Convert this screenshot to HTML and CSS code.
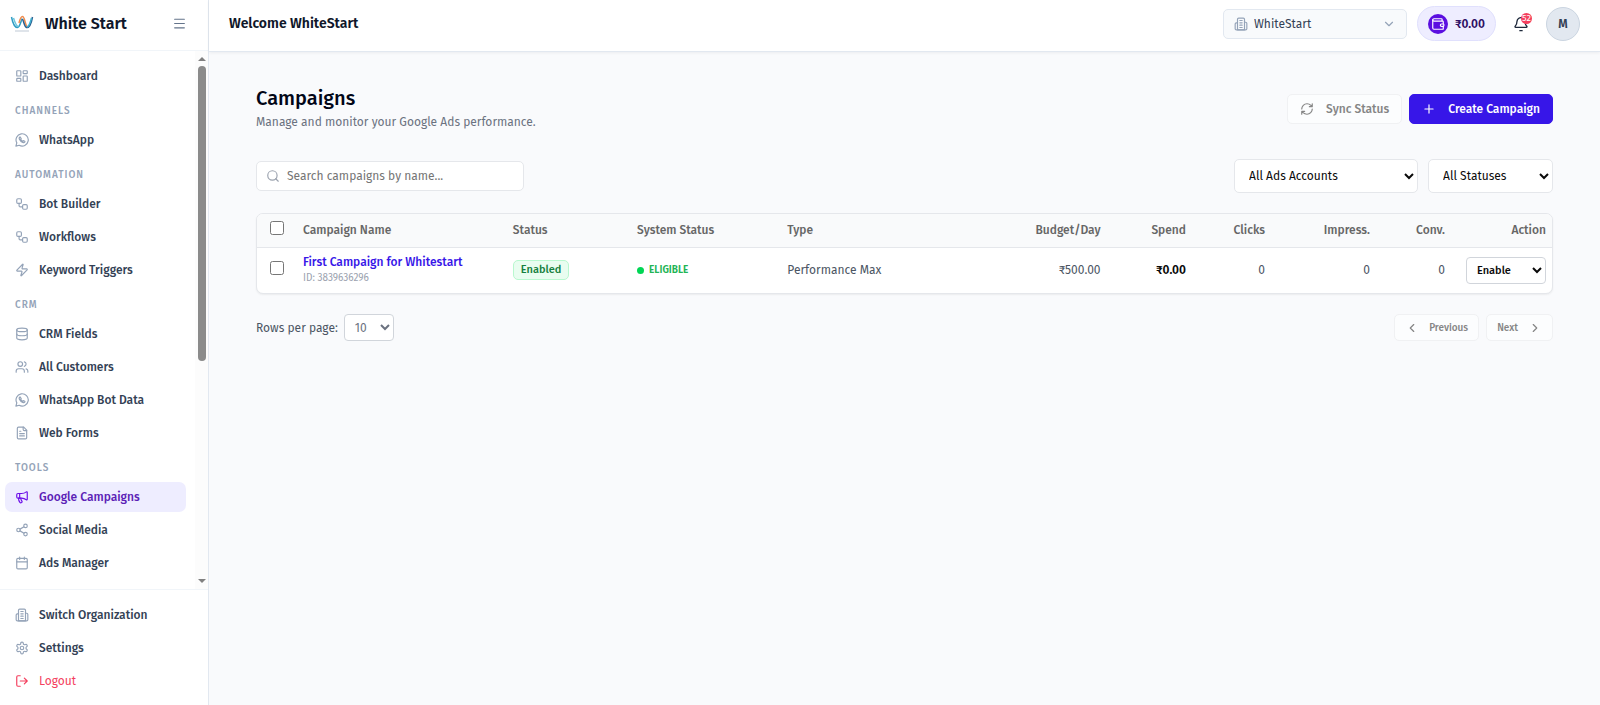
FILE: index.html
```html
<!DOCTYPE html>
<html lang="en">
<head>
    <meta charset="UTF-8">
    <meta name="viewport" content="width=device-width, initial-scale=1.0">
    <title>White Start - Campaigns</title>
    <link rel="stylesheet" href="styles.css">
</head>
<body>
    <!-- icon sprite -->
    <svg class="sprite" aria-hidden="true">
        <symbol id="i-dashboard" viewBox="0 0 24 24"><rect x="3" y="3" width="7" height="9" rx="1"/><rect x="14" y="3" width="7" height="5" rx="1"/><rect x="14" y="12" width="7" height="9" rx="1"/><rect x="3" y="16" width="7" height="5" rx="1"/></symbol>
        <symbol id="i-whatsapp" viewBox="0 0 24 24"><path d="M1.5 22.5l1.6-5.6A10.5 10.5 0 1 1 7.2 21z"/><path d="M8.6 6.8c-1.6.9-1.7 2.800-.8 4.500 1.300 2.500 3 4.200 5.400 5.100 1.800.6 3.600-.1 3.900-2l-2.500-1.300-1.200 1.300c-1.800-.7-2.900-1.900-3.700-3.500l1-1.300z"/></symbol>
        <symbol id="i-workflow" viewBox="0 0 24 24"><rect x="3" y="3" width="8" height="8" rx="2"/><path d="M7 11v4a2 2 0 0 0 2 2h4"/><rect x="13" y="13" width="8" height="8" rx="2"/></symbol>
        <symbol id="i-zap" viewBox="0 0 24 24"><path d="M4 14a1 1 0 0 1-.78-1.630l9.900-10.200a.5.5 0 0 1 .86.460l-1.920 6.020A1 1 0 0 0 13 10h7a1 1 0 0 1 .78 1.630l-9.900 10.200a.5.5 0 0 1-.86-.460l1.920-6.020A1 1 0 0 0 11 14z"/></symbol>
        <symbol id="i-database" viewBox="0 0 24 24"><ellipse cx="12" cy="5" rx="9" ry="3"/><path d="M3 5v14a9 3 0 0 0 18 0V5"/><path d="M3 12a9 3 0 0 0 18 0"/></symbol>
        <symbol id="i-users" viewBox="0 0 24 24"><path d="M16 21v-2a4 4 0 0 0-4-4H6a4 4 0 0 0-4 4v2"/><circle cx="9" cy="7" r="4"/><path d="M22 21v-2a4 4 0 0 0-3-3.870"/><path d="M16 3.130a4 4 0 0 1 0 7.750"/></symbol>
        <symbol id="i-file" viewBox="0 0 24 24"><path d="M15 2H6a2 2 0 0 0-2 2v16a2 2 0 0 0 2 2h12a2 2 0 0 0 2-2V7z"/><path d="M14 2v4a2 2 0 0 0 2 2h4M10 9H8M16 13H8M16 17H8"/></symbol>
        <symbol id="i-megaphone" viewBox="0 0 24 24"><path d="M11 6a13 13 0 0 0 8.400-2.800A1 1 0 0 1 21 4v12a1 1 0 0 1-1.600.8A13 13 0 0 0 11 14H5a2 2 0 0 1-2-2V8a2 2 0 0 1 2-2z"/><path d="M6 14a12 12 0 0 0 2.400 7.200 2 2 0 0 0 3.200-2.400A8 8 0 0 1 10 14M8 6v8"/></symbol>
        <symbol id="i-share" viewBox="0 0 24 24"><circle cx="18" cy="5" r="3"/><circle cx="6" cy="12" r="3"/><circle cx="18" cy="19" r="3"/><path d="M8.600 13.500l6.800 4M15.400 6.500l-6.800 4"/></symbol>
        <symbol id="i-calendar" viewBox="0 0 24 24"><path d="M8 2v4M16 2v4M3 10h18"/><rect x="3" y="4" width="18" height="18" rx="2"/></symbol>
        <symbol id="i-building" viewBox="0 0 24 24"><path d="M6 22V4a2 2 0 0 1 2-2h8a2 2 0 0 1 2 2v18z"/><path d="M6 10H4a2 2 0 0 0-2 2v8a2 2 0 0 0 2 2h16a2 2 0 0 0 2-2v-9a2 2 0 0 0-2-2h-2M10 6h4M10 10h4M10 14h4M10 18h4"/></symbol>
        <symbol id="i-settings" viewBox="0 0 24 24"><path d="M12.220 2h-.440a2 2 0 0 0-2 2v.180a2 2 0 0 1-1 1.730l-.430.250a2 2 0 0 1-2 0l-.150-.080a2 2 0 0 0-2.730.730l-.220.380a2 2 0 0 0 .730 2.730l.150.100a2 2 0 0 1 1 1.720v.510a2 2 0 0 1-1 1.740l-.150.090a2 2 0 0 0-.730 2.730l.220.380a2 2 0 0 0 2.730.730l.150-.080a2 2 0 0 1 2 0l.430.250a2 2 0 0 1 1 1.730V20a2 2 0 0 0 2 2h.440a2 2 0 0 0 2-2v-.180a2 2 0 0 1 1-1.730l.430-.250a2 2 0 0 1 2 0l.150.080a2 2 0 0 0 2.730-.730l.220-.390a2 2 0 0 0-.730-2.730l-.150-.080a2 2 0 0 1-1-1.740v-.500a2 2 0 0 1 1-1.740l.150-.090a2 2 0 0 0 .730-2.730l-.220-.380a2 2 0 0 0-2.730-.730l-.150.080a2 2 0 0 1-2 0l-.430-.250a2 2 0 0 1-1-1.730V4a2 2 0 0 0-2-2z"/><circle cx="12" cy="12" r="3"/></symbol>
        <symbol id="i-logout" viewBox="0 0 24 24"><path d="M9 21H5a2 2 0 0 1-2-2V5a2 2 0 0 1 2-2h4M16 17l5-5-5-5M21 12H9"/></symbol>
        <symbol id="i-menu" viewBox="0 0 24 24"><path d="M3 4h18M3 12h18M3 20h18"/></symbol>
        <symbol id="i-down" viewBox="0 0 24 24"><path d="M6 9l6 6 6-6"/></symbol>
        <symbol id="i-left" viewBox="0 0 24 24"><path d="M15 18l-6-6 6-6"/></symbol>
        <symbol id="i-right" viewBox="0 0 24 24"><path d="M9 18l6-6-6-6"/></symbol>
        <symbol id="i-wallet" viewBox="0 0 24 24"><path d="M19 7V4a1 1 0 0 0-1-1H5a2 2 0 0 0 0 4h15a1 1 0 0 1 1 1v4h-3a2 2 0 0 0 0 4h3a1 1 0 0 0 1-1v-2a1 1 0 0 0-1-1"/><path d="M3 5v14a2 2 0 0 0 2 2h15a1 1 0 0 0 1-1v-4"/></symbol>
        <symbol id="i-bell" viewBox="0 0 24 24"><path d="M10.300 22h3.400"/><path d="M13 2.500A6 6 0 0 0 6 8c0 4.500-1.400 6-2.700 7.300A1 1 0 0 0 4 17h16a1 1 0 0 0 .700-1.700C19.600 14.200 18.600 13 18.200 10.500"/></symbol>
        <symbol id="i-refresh" viewBox="0 0 24 24"><path d="M3 12a9 9 0 0 1 9-9 9.750 9.750 0 0 1 6.740 2.740L21 8M21 3v5h-5M21 12a9 9 0 0 1-9 9 9.750 9.750 0 0 1-6.740-2.740L3 16M8 16H3v5"/></symbol>
        <symbol id="i-plus" viewBox="0 0 24 24"><path d="M5 12h14M12 5v14"/></symbol>
        <symbol id="i-search" viewBox="0 0 24 24"><circle cx="11" cy="11" r="8"/><path d="M21 21l-4.300-4.300"/></symbol>
    </svg>

    <div class="app">
        <aside class="sidebar">
            <div class="brand">
                <svg class="logo" viewBox="0 0 24 20" aria-hidden="true">
                    <path d="M1.500 3c1.200 6 3.300 10.500 6 10.500 2.500 0 3-5.500 4.700-9" stroke="#2f9cc4"/>
                    <path d="M3.500 4c1.500 5 3 8.500 5 8.500" stroke="#6cc5dc"/>
                    <path d="M9 9c1-4 2-6.500 3.500-6.500 2.500 0 2.500 10 5.500 11" stroke="#f08a4b"/>
                    <path d="M12.500 5c1.500 3 2 8 4 8.500 3 .5 5-5 6-10.500" stroke="#2c5f8f"/>
                    <path d="M17 13c2.500-1 3.500-5 4.500-9" stroke="#3fb0d0"/>
                    <path d="M5 17h14" stroke="#d5dbe3"/>
                </svg>
                <span class="brand-name">White Start</span>
                <button class="menu-btn" aria-label="Toggle menu"><svg class="icon"><use href="#i-menu"/></svg></button>
            </div>

            <div class="nav-wrap">
                <nav class="nav">
                    <a href="#" class="nav-item"><svg class="icon"><use href="#i-dashboard"/></svg>Dashboard</a>
                    <h3>CHANNELS</h3>
                    <a href="#" class="nav-item"><svg class="icon"><use href="#i-whatsapp"/></svg>WhatsApp</a>
                    <h3>AUTOMATION</h3>
                    <a href="#" class="nav-item"><svg class="icon"><use href="#i-workflow"/></svg>Bot Builder</a>
                    <a href="#" class="nav-item"><svg class="icon"><use href="#i-workflow"/></svg>Workflows</a>
                    <a href="#" class="nav-item"><svg class="icon"><use href="#i-zap"/></svg>Keyword Triggers</a>
                    <h3>CRM</h3>
                    <a href="#" class="nav-item"><svg class="icon"><use href="#i-database"/></svg>CRM Fields</a>
                    <a href="#" class="nav-item"><svg class="icon"><use href="#i-users"/></svg>All Customers</a>
                    <a href="#" class="nav-item"><svg class="icon"><use href="#i-whatsapp"/></svg>WhatsApp Bot Data</a>
                    <a href="#" class="nav-item"><svg class="icon"><use href="#i-file"/></svg>Web Forms</a>
                    <h3>TOOLS</h3>
                    <a href="#" class="nav-item active"><svg class="icon"><use href="#i-megaphone"/></svg>Google Campaigns</a>
                    <a href="#" class="nav-item"><svg class="icon"><use href="#i-share"/></svg>Social Media</a>
                    <a href="#" class="nav-item"><svg class="icon"><use href="#i-calendar"/></svg>Ads Manager</a>
                </nav>
                <div class="scrollbar" aria-hidden="true">
                    <span class="arrow-up"></span>
                    <div class="track"><div class="thumb"></div></div>
                    <span class="arrow-down"></span>
                </div>
            </div>

            <div class="nav-footer">
                <a href="#" class="nav-item"><svg class="icon"><use href="#i-building"/></svg>Switch Organization</a>
                <a href="#" class="nav-item"><svg class="icon"><use href="#i-settings"/></svg>Settings</a>
                <a href="#" class="nav-item logout"><svg class="icon"><use href="#i-logout"/></svg>Logout</a>
            </div>
        </aside>

        <div class="main">
            <header class="topbar">
                <h2>Welcome WhiteStart</h2>
                <div class="org">
                    <svg class="icon org-icon"><use href="#i-building"/></svg>
                    <select aria-label="Organization"><option>WhiteStart</option></select>
                    <svg class="icon org-arrow"><use href="#i-down"/></svg>
                </div>
                <button class="wallet">
                    <span class="wallet-icon"><svg class="icon"><use href="#i-wallet"/></svg></span>
                    ₹0.00
                </button>
                <button class="bell" aria-label="Notifications">
                    <svg class="icon"><use href="#i-bell"/></svg>
                    <span class="badge">52</span>
                </button>
                <button class="avatar">M</button>
            </header>

            <main class="content">
                <div class="page-head">
                    <div>
                        <h1>Campaigns</h1>
                        <p>Manage and monitor your Google Ads performance.</p>
                    </div>
                    <div class="actions">
                        <button class="btn sync" disabled><svg class="icon"><use href="#i-refresh"/></svg>Sync Status</button>
                        <button class="btn create"><svg class="icon"><use href="#i-plus"/></svg>Create Campaign</button>
                    </div>
                </div>

                <div class="filters">
                    <div class="search">
                        <svg class="icon"><use href="#i-search"/></svg>
                        <input type="text" placeholder="Search campaigns by name..." aria-label="Search campaigns">
                    </div>
                    <select class="accounts" aria-label="Ads account"><option>All Ads Accounts</option></select>
                    <select class="statuses" aria-label="Status"><option>All Statuses</option></select>
                </div>

                <div class="table-card">
                    <table>
                        <colgroup>
                            <col class="c-check"><col class="c-name"><col class="c-status"><col class="c-system"><col>
                            <col class="c-budget"><col class="c-spend"><col class="c-clicks"><col class="c-impress"><col class="c-conv"><col class="c-action">
                        </colgroup>
                        <thead>
                            <tr>
                                <th class="check"><input type="checkbox" aria-label="Select all"></th>
                                <th>Campaign Name</th>
                                <th>Status</th>
                                <th>System Status</th>
                                <th>Type</th>
                                <th class="num">Budget/Day</th>
                                <th class="num">Spend</th>
                                <th class="num">Clicks</th>
                                <th class="num">Impress.</th>
                                <th class="num">Conv.</th>
                                <th class="num">Action</th>
                            </tr>
                        </thead>
                        <tbody>
                            <tr>
                                <td class="check"><input type="checkbox" aria-label="Select campaign"></td>
                                <td><a href="#" class="campaign">First Campaign for Whitestart</a><div class="campaign-id">ID: 3839636296</div></td>
                                <td><span class="enabled">Enabled</span></td>
                                <td><span class="eligible">ELIGIBLE</span></td>
                                <td>Performance Max</td>
                                <td class="num">₹500.00</td>
                                <td class="num spend">₹0.00</td>
                                <td class="num">0</td>
                                <td class="num">0</td>
                                <td class="num">0</td>
                                <td class="num"><select class="action" aria-label="Action"><option>Enable</option></select></td>
                            </tr>
                        </tbody>
                    </table>
                </div>

                <div class="pagination">
                    <label for="rows">Rows per page:</label>
                    <select id="rows"><option>10</option></select>
                    <div class="pages">
                        <button class="btn" disabled><svg class="icon"><use href="#i-left"/></svg>Previous</button>
                        <button class="btn" disabled>Next<svg class="icon"><use href="#i-right"/></svg></button>
                    </div>
                </div>
            </main>
        </div>
    </div>
</body>
</html>
```

FILE: styles.css
```css
* {
    box-sizing: border-box;
}

body {
    margin: 0;
    background-color: #f9fafc;
    color: #0a0a0a;
    font-family: "Fira Sans", Roboto, "Noto Sans", sans-serif;
    font-size: 12px;
    line-height: 16px;
}

h1, h2, h3, p {
    margin: 0;
}

a {
    text-decoration: none;
}

button, input, select {
    font: inherit;
    color: inherit;
}

.sprite {
    position: absolute;
    width: 0;
    height: 0;
}

.icon {
    width: 14px;
    height: 14px;
    flex-shrink: 0;
    fill: none;
    stroke: currentColor;
    stroke-width: 2;
    stroke-linecap: round;
    stroke-linejoin: round;
}

.app {
    display: flex;
    min-height: 100vh;
}

/* Sidebar */
.sidebar {
    display: flex;
    flex-direction: column;
    width: 209px;
    height: 100vh;
    flex-shrink: 0;
    background-color: #fff;
    border-right: 1px solid #e2e8f0;
}

.brand {
    display: flex;
    align-items: center;
    height: 51px;
    padding: 0 20px 3px 10px;
    border-bottom: 1px solid #f1f5f9;
}

.logo {
    width: 24px;
    height: 20px;
    margin-right: 11px;
    fill: none;
    stroke-width: 1.5;
}

.brand-name {
    flex: 1;
    font-size: 16px;
    font-weight: 600;
    color: #0f172a;
}

.menu-btn {
    display: flex;
    padding: 2px;
    border: none;
    background: none;
    color: #64748b;
}

.menu-btn .icon {
    width: 13px;
    height: 13px;
}

.nav-wrap {
    display: flex;
    flex: 1;
    min-height: 0;
}

.nav {
    flex: 1;
    padding: 10px 9px 0 5px;
    overflow: hidden;
}

.nav h3 {
    height: 31px;
    padding: 11px 10px 0;
    font-size: 10px;
    line-height: 12px;
    font-weight: 500;
    letter-spacing: 1px;
    color: #94a3b8;
}

.nav-item {
    display: flex;
    align-items: center;
    gap: 10px;
    height: 30px;
    margin-bottom: 3px;
    padding: 0 10px;
    border-radius: 7px;
    font-weight: 500;
    color: #334155;
}

.nav-item .icon {
    color: #94a3b8;
}

.nav-item.active {
    background-color: #eeedff;
    color: #5b21b6;
}

.nav-item.active .icon {
    color: #6d0fe8;
}

.nav-item.logout, .nav-item.logout .icon {
    font-weight: 400;
    color: #f43f5e;
}

.scrollbar {
    display: flex;
    flex-direction: column;
    align-items: center;
    width: 13px;
    padding: 6px 0;
    background-color: #fcfcfc;
}

.arrow-up, .arrow-down {
    border: 4px solid transparent;
}

.arrow-up {
    border-top: none;
    border-bottom-color: #808080;
}

.arrow-down {
    border-bottom: none;
    border-top-color: #808080;
}

.track {
    flex: 1;
    width: 8px;
    padding: 5px 0;
}

.thumb {
    height: 58%;
    border-radius: 4px;
    background-color: #8b8b8b;
}

.nav-footer {
    padding: 10px 9px 6px 5px;
    border-top: 1px solid #f1f5f9;
}

/* Top bar */
.main {
    flex: 1;
    min-width: 0;
}

.topbar {
    display: flex;
    align-items: center;
    height: 52px;
    padding: 0 20px 4px;
    background-color: #fff;
    border-bottom: 1px solid #e2e8f0;
    box-shadow: 0 1px 3px rgba(15, 23, 42, 0.06);
}

.topbar h2 {
    flex: 1;
    font-size: 14px;
    font-weight: 600;
    color: #0f172a;
}

.org {
    position: relative;
    width: 184px;
    margin-right: 10px;
}

.org select {
    width: 100%;
    height: 30px;
    padding: 0 30px;
    border: 1px solid #e2e8f0;
    border-radius: 5px;
    background-color: #f8fafc;
    color: #334155;
    appearance: none;
}

.org-icon, .org-arrow {
    position: absolute;
    top: 8px;
    color: #94a3b8;
}

.org-icon {
    left: 11px;
}

.org-arrow {
    right: 11px;
}

.wallet {
    display: flex;
    align-items: center;
    gap: 7px;
    height: 35px;
    padding: 0 10px;
    border: 1px solid #e0e0fd;
    border-radius: 18px;
    background-color: #eeedff;
    font-weight: 600;
    color: #2e1065;
}

.wallet-icon {
    display: flex;
    align-items: center;
    justify-content: center;
    width: 20px;
    height: 20px;
    border-radius: 50%;
    background-color: #5b0fe0;
    color: #fff;
}

.wallet-icon .icon {
    width: 14px;
    height: 14px;
}

.bell {
    position: relative;
    display: flex;
    margin: 0 17px;
    padding: 0;
    border: none;
    background: none;
    color: #1e293b;
}

.bell .icon {
    width: 16px;
    height: 16px;
}

.badge {
    position: absolute;
    top: -3px;
    right: -3px;
    width: 11px;
    height: 11px;
    border-radius: 50%;
    background-color: #f43f5e;
    color: #fff;
    font-size: 9px;
    line-height: 11px;
}

.avatar {
    width: 34px;
    height: 34px;
    padding: 0;
    border: 1px solid #cbd5e1;
    border-radius: 50%;
    background-color: #e2e8f0;
    font-weight: 600;
    color: #334155;
}

/* Campaigns page */
.content {
    padding: 33px 47px;
}

.page-head {
    display: flex;
    align-items: center;
    justify-content: space-between;
    margin-bottom: 26px;
}

.page-head h1 {
    font-size: 20px;
    line-height: 27px;
    font-weight: 500;
    color: #020617;
}

.page-head p {
    line-height: 21px;
    color: #6b7280;
}

.actions {
    display: flex;
    gap: 7px;
}

.btn {
    display: flex;
    align-items: center;
    border: 1px solid #f0f1f3;
    border-radius: 5px;
    background-color: #fcfdfe;
    font-weight: 500;
    color: #858585;
}

.actions .btn {
    gap: 12px;
    height: 30px;
    padding: 0 12px;
}

.actions .create {
    border-color: #3716e8;
    background-color: #3716e8;
    color: #fff;
}

.filters {
    display: flex;
    align-items: center;
    gap: 10px;
    margin-bottom: 20px;
}

.search {
    position: relative;
    width: 268px;
    margin-right: auto;
}

.search .icon {
    position: absolute;
    top: 8px;
    left: 10px;
    color: #9ca3af;
}

.search input {
    width: 100%;
    height: 30px;
    padding: 0 10px 0 30px;
    border: 1px solid #e5e7eb;
    border-radius: 5px;
    background-color: #fff;
}

.search input::placeholder {
    color: #757575;
}

.filters select {
    height: 34px;
    padding: 0 0 0 10px;
    border: 1px solid #e5e7eb;
    border-radius: 5px;
    background-color: #fff;
}

.filters .accounts {
    width: 184px;
}

.filters .statuses {
    width: 125px;
}

.table-card {
    margin-bottom: 20px;
    border: 1px solid #e5e7eb;
    border-radius: 7px;
    background-color: #fff;
    box-shadow: 0 1px 2px rgba(0, 0, 0, 0.06);
    overflow: hidden;
}

table {
    width: 100%;
    border-collapse: collapse;
    table-layout: fixed;
}

.c-check {
    width: 39px;
}

.c-name {
    width: 16.2%;
}

.c-status {
    width: 9.6%;
}

.c-system {
    width: 11.6%;
}

.c-budget, .c-spend {
    width: 6.6%;
}

.c-clicks {
    width: 6.1%;
}

.c-impress {
    width: 8.1%;
}

.c-conv {
    width: 5.8%;
}

.c-action {
    width: 7.8%;
}

th {
    height: 33px;
    padding: 0 7px;
    background-color: #f9fafb;
    border-bottom: 1px solid #e5e7eb;
    text-align: left;
    font-weight: 500;
    color: #666;
}

td {
    height: 46px;
    padding: 0 7px;
    color: #4b5563;
}

.num {
    padding-right: 6px;
    text-align: right;
}

.check {
    padding: 0 0 4px 13px;
}

.check input {
    display: block;
    width: 14px;
    height: 14px;
    margin: 0;
}

.campaign {
    font-weight: 500;
    color: #3716e8;
}

.campaign-id {
    font-size: 10px;
    line-height: 17px;
    color: #9ca3af;
}

.enabled {
    display: inline-block;
    padding: 1px 7px;
    border: 1px solid #b9f8cf;
    border-radius: 5px;
    background-color: #e9fdf0;
    font-size: 11px;
    font-weight: 500;
    color: #15803d;
}

.eligible {
    display: flex;
    align-items: center;
    gap: 5px;
    font-size: 10px;
    font-weight: 600;
    color: #22b455;
}

.eligible::before {
    content: "";
    width: 7px;
    height: 7px;
    border-radius: 50%;
    background-color: #00d655;
}

.spend {
    font-weight: 600;
    color: #0a0a0a;
}

.action {
    width: 80px;
    height: 27px;
    padding: 0 0 0 6px;
    border: 1px solid #d1d5db;
    border-radius: 4px;
    background-color: #fff;
    font-size: 11px;
    font-weight: 500;
    color: #0a0a0a;
}

.pagination {
    display: flex;
    align-items: center;
    gap: 6px;
    color: #4b5563;
}

.pagination select {
    width: 50px;
    height: 27px;
    padding: 0 0 0 6px;
    border: 1px solid #d1d5db;
    border-radius: 4px;
    background-color: #fff;
    color: #6b7280;
}

.pages {
    display: flex;
    gap: 7px;
    margin-left: auto;
}

.pages .btn {
    gap: 10px;
    height: 27px;
    padding: 0 10px;
    font-size: 10px;
}
```
